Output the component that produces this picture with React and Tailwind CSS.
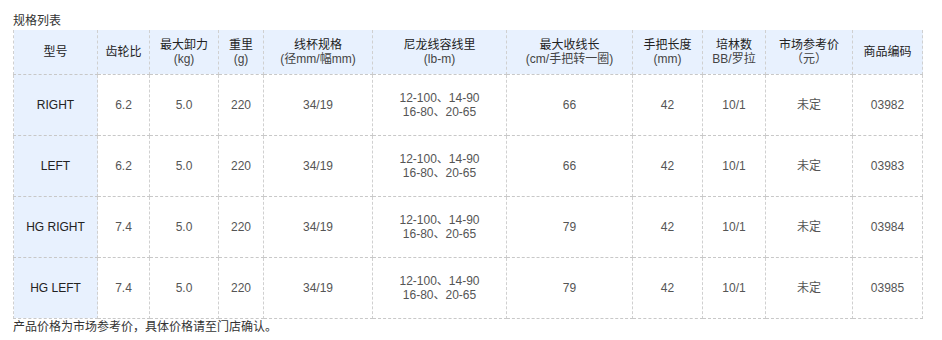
import React from 'react'

const cols = [
  { w: 84, h: ['型号'] },
  { w: 52, h: ['齿轮比'] },
  { w: 69, h: ['最大卸力', '(kg)'] },
  { w: 45, h: ['重里', '(g)'] },
  { w: 109, h: ['线杯规格', '(径mm/幅mm)'] },
  { w: 134, h: ['尼龙线容线里', '(lb-m)'] },
  { w: 126, h: ['最大收线长', '(cm/手把转一圈)'] },
  { w: 70, h: ['手把长度', '(mm)'] },
  { w: 63, h: ['培林数', 'BB/罗拉'] },
  { w: 87, h: ['市场参考价', '（元）'] },
  { w: 70, h: ['商品编码'] },
]

const rows = [
  ['RIGHT', '6.2', '03982'],
  ['LEFT', '6.2', '03983'],
  ['HG RIGHT', '7.4', '03984'],
  ['HG LEFT', '7.4', '03985'],
]

export default function App() {
  return (
    <div className="w-[942px] h-[340px] bg-white pt-[14px] pl-[13px] text-[12px] leading-[14px] text-[#333]" style={{ fontFamily: '"Liberation Sans", "Noto Sans CJK SC", sans-serif' }}>
      <div className="h-[16px]">规格列表</div>
      <table className="border-collapse table-fixed w-[909px]">
        <colgroup>
          {cols.map((c, i) => (
            <col key={i} style={{ width: c.w }} />
          ))}
        </colgroup>
        <thead>
          <tr className="h-[44px] bg-[#e8f1fe]">
            {cols.map((c, i) => (
              <th key={i} className="font-normal text-center align-middle p-0 border-x border-dashed border-[#d0d0d0] border-b border-b-solid border-b-[#c8c8c8] text-[#222]">
                {c.h.map((t, j) => (
                  <div key={j} className={j > 0 ? 'text-[#444]' : ''}>{t}</div>
                ))}
              </th>
            ))}
          </tr>
        </thead>
        <tbody>
          {rows.map((r, i) => (
            <tr key={i} className="h-[61px]">
              <td className="p-0 text-center bg-[#e8f1fe] text-[#222] border-x border-dashed border-[#d0d0d0] border-b border-b-solid border-b-[#c8c8c8]">{r[0]}</td>
              {[r[1], '5.0', '220', '34/19', 'line', i < 2 ? '66' : '79', '42', '10/1', '未定', r[2]].map((v, j) => (
                <td key={j} className="p-0 text-center text-[#555] border-x border-dashed border-[#d0d0d0] border-b border-b-solid border-b-[#c8c8c8]">
                  {v === 'line' ? (
                    <>
                      <div>12-100、14-90</div>
                      <div>16-80、20-65</div>
                    </>
                  ) : (
                    v
                  )}
                </td>
              ))}
            </tr>
          ))}
        </tbody>
      </table>
      <div className="mt-[1px]">产品价格为市场参考价，具体价格请至门店确认。</div>
    </div>
  )
}
